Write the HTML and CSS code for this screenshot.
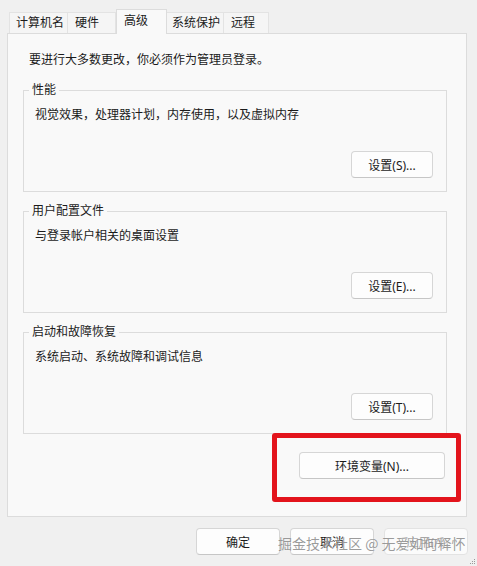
FILE: index.html
```html
<!DOCTYPE html>
<html lang="zh-CN">
<head>
<meta charset="utf-8">
<title>系统属性 - 高级</title>
<link rel="stylesheet" href="styles.css">
</head>
<body>
<div class="dialog">
  <div class="tabs">
    <div class="tab tab-name">计算机名</div>
    <div class="tab tab-hw">硬件</div>
    <div class="tab tab-adv is-active">高级</div>
    <div class="tab tab-prot">系统保护</div>
    <div class="tab tab-remote">远程</div>
  </div>
  <div class="panel">
    <p class="intro">要进行大多数更改，你必须作为管理员登录。</p>
    <fieldset class="group">
      <legend>性能</legend>
      <p class="desc">视觉效果，处理器计划，内存使用，以及虚拟内存</p>
      <div class="actions"><button class="btn">设置(S)...</button></div>
    </fieldset>
    <fieldset class="group">
      <legend>用户配置文件</legend>
      <p class="desc">与登录帐户相关的桌面设置</p>
      <div class="actions"><button class="btn">设置(E)...</button></div>
    </fieldset>
    <fieldset class="group">
      <legend>启动和故障恢复</legend>
      <p class="desc">系统启动、系统故障和调试信息</p>
      <div class="actions"><button class="btn">设置(T)...</button></div>
    </fieldset>
    <div class="env-row"><button class="btn btn-env">环境变量(N)...</button></div>
  </div>
  <div class="footer">
    <button class="btn btn-foot">确定</button>
    <button class="btn btn-foot">取消</button>
    <button class="btn btn-foot" disabled>应用(A)</button>
  </div>
  <div class="highlight"></div>
  <div class="watermark">掘金技术社区 @ 无爱如何释怀</div>
  <svg class="grip" width="6" height="6" viewBox="0 0 6 6"><rect x="4" y="0" width="1" height="1" fill="#9a9a9a"/><rect x="2" y="2" width="1" height="1" fill="#9a9a9a"/><rect x="4" y="2" width="1" height="1" fill="#9a9a9a"/><rect x="0" y="4" width="1" height="1" fill="#9a9a9a"/><rect x="2" y="4" width="1" height="1" fill="#9a9a9a"/><rect x="4" y="4" width="1" height="1" fill="#9a9a9a"/></svg>
</div>
</body>
</html>
```
FILE: styles.css
```css
html, body {
  margin: 0;
  padding: 0;
  background: #f0f0f0;
}

body {
  font-family: "Noto Sans", "Noto Sans CJK SC", sans-serif;
  font-size: 12px;
  color: #1b1b1b;
}

.dialog {
  position: relative;
  width: 477px;
  height: 566px;
  box-sizing: border-box;
  padding: 9px 9px 0 7px;
  overflow: hidden;
}

.tabs {
  display: flex;
  align-items: flex-start;
  height: 25px;
  margin-left: 2px;
  position: relative;
  z-index: 2;
}

.tab {
  box-sizing: border-box;
  height: 21px;
  margin-top: 3px;
  padding-left: 6px;
  line-height: 20px;
  background: #f5f5f5;
  border: 1px solid #e3e3e3;
  border-bottom: none;
  border-left: none;
  white-space: nowrap;
}

.tab-name { width: 59px; border-left: 1px solid #e3e3e3; }
.tab-hw { width: 48px; padding-left: 7px; }
.tab-adv { width: 51px; padding-left: 7px; }
.tab-prot { width: 57px; padding-left: 5px; }
.tab-remote { width: 45px; padding-left: 7px; }

.tab.is-active {
  height: 25px;
  margin-top: 0;
  line-height: 22px;
  background: #f9f9f9;
  border: 1px solid #dcdcdc;
  border-bottom: none;
}

.panel {
  box-sizing: border-box;
  width: 460px;
  height: 484px;
  margin-top: -1px;
  background: #f9f9f9;
  border: 1px solid #dcdcdc;
  padding: 18px 19px 0 15px;
  position: relative;
  z-index: 1;
}

.intro {
  margin: 0 0 14px 6px;
  line-height: 16px;
}

.group {
  margin: 11px 0 0 0;
  padding: 9px 13px 13px 11px;
  border: 1px solid #dcdcdc;
  min-width: 0;
}

.intro + .group {
  margin-top: 0;
}

.group legend {
  margin-left: -6px;
  padding: 0 3px;
  line-height: 16px;
  font-size: 12px;
}

.desc {
  margin: 0;
  line-height: 16px;
}

.actions {
  display: flex;
  justify-content: flex-end;
  margin-top: 28px;
}

.btn {
  box-sizing: border-box;
  width: 82px;
  height: 27px;
  padding: 0;
  font-family: "Noto Sans", "Noto Sans CJK SC", sans-serif;
  font-size: 12px;
  color: #1b1b1b;
  background: #fdfdfd;
  border: 1px solid #d6d6d6;
  border-bottom-color: #c6c6c6;
  border-radius: 4px;
}

.env-row {
  display: flex;
  justify-content: flex-end;
  margin-top: 18px;
  padding-right: 2px;
}

.btn-env {
  width: 146px;
}

.footer {
  display: flex;
  justify-content: flex-end;
  gap: 10px;
  margin-top: 11px;
}

.btn-foot {
  width: 84px;
}

.btn-foot:disabled {
  color: #a6a6a6;
  background: #fbfbfb;
  border-color: #e3e3e3;
}

.highlight {
  position: absolute;
  left: 272px;
  top: 433px;
  width: 189px;
  height: 69px;
  box-sizing: border-box;
  border: 5px solid #e3141c;
  border-radius: 3px;
  z-index: 3;
}

.watermark {
  position: absolute;
  left: 278px;
  top: 533px;
  font-family: "Noto Sans CJK SC", sans-serif;
  font-size: 14px;
  line-height: 20px;
  color: rgba(110, 110, 110, 0.7);
  text-shadow: 0 0 1px rgba(255, 255, 255, 0.8);
  white-space: nowrap;
  z-index: 4;
}

.grip {
  position: absolute;
  right: 1px;
  bottom: 1px;
}
```
